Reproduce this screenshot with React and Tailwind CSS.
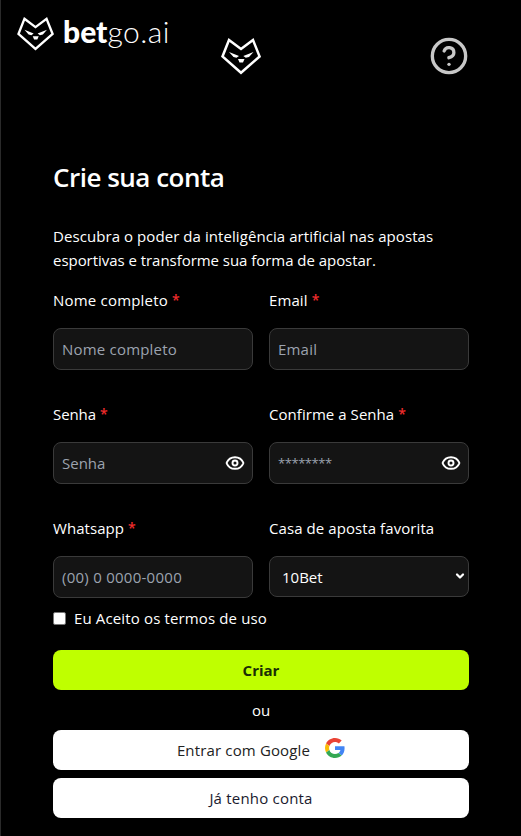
import { CircleHelp, Eye, ChevronDown } from "lucide-react";

function Wolf({ className }) {
  return (
    <svg viewBox="0 0 40 38" className={className} fill="none">
      <path
        d="M8 3 20 12 32 3 38.6 19.5 20 35.8 1.5 19.5Z"
        stroke="white"
        strokeWidth="2.5"
      />
      <path d="M8 15 18 19 15.5 20.8 12.5 20ZM32.5 15 22.3 19 24.8 20.8 28 20ZM17 22H23.5L22 25.4H18.5Z" fill="white" />
    </svg>
  );
}

function GoogleMark() {
  return (
    <svg viewBox="0 0 48 48" className="mb-1 size-5">
      <path fill="#EA4335" d="M24 9.5c3.54 0 6.71 1.22 9.21 3.6l6.85-6.85C35.9 2.38 30.47 0 24 0 14.62 0 6.51 5.38 2.56 13.22l7.98 6.19C12.43 13.72 17.74 9.5 24 9.5z" />
      <path fill="#4285F4" d="M46.98 24.55c0-1.57-.15-3.09-.38-4.55H24v9.02h12.94c-.58 2.96-2.26 5.48-4.78 7.18l7.73 6c4.51-4.18 7.09-10.36 7.09-17.65z" />
      <path fill="#FBBC05" d="M10.53 28.59c-.48-1.45-.76-2.99-.76-4.59s.27-3.14.76-4.59l-7.98-6.19C.92 16.46 0 20.12 0 24c0 3.88.92 7.54 2.56 10.78l7.97-6.19z" />
      <path fill="#34A853" d="M24 48c6.48 0 11.93-2.13 15.89-5.81l-7.73-6c-2.15 1.45-4.92 2.3-8.16 2.3-6.26 0-11.57-4.22-13.47-9.91l-7.98 6.19C6.51 42.62 14.62 48 24 48z" />
    </svg>
  );
}

function Field({ label, labelClass = "tracking-[0.1px]", required, placeholder, placeholderClass = "tracking-[0.2px]", secret }) {
  return (
    <label className="flex flex-col gap-4">
      <span className="flex h-6 items-center gap-1 whitespace-nowrap">
        <span className={labelClass}>{label}</span>
        {required && <span className="text-[14px] font-semibold text-[#f02c2c]">*</span>}
      </span>
      <span className="flex h-[42px] items-center justify-between rounded-lg border border-[#3a3a3a] bg-[#141414] pl-2 pr-[7px]">
        <span className={`whitespace-nowrap text-[#9ca3af] ${placeholderClass}`}>{placeholder}</span>
        {secret && <Eye className="size-5 text-white" strokeWidth={2.3} />}
      </span>
    </label>
  );
}

export default function App() {
  return (
    <div className="h-[836px] w-[521px] overflow-hidden border-l border-[#2a2a2a] bg-black font-['Open_Sans','Noto_Sans',sans-serif] text-[15px] leading-6 text-white">
      <header className="flex h-[161px] items-start pl-4 pt-4">
        <div className="flex w-[204px] items-start">
          <Wolf className="h-[35px] w-[37px]" />
          <div className="-mt-px ml-[9px] whitespace-nowrap font-[Lato,sans-serif] text-[30px] leading-[32px]">
            <span className="font-black">bet</span>
            <span className="font-light tracking-[0.5px]">go.ai</span>
          </div>
        </div>
        <Wolf className="mt-[21px] h-[38px] w-10" />
        <CircleHelp className="ml-[168px] mt-5 size-10 text-[#c8c8c8]" strokeWidth={2} />
      </header>

      <main className="ml-[52px] flex w-[416px] flex-col">
        <h1 className="h-8 whitespace-nowrap text-[26px] font-semibold leading-8 tracking-[-0.5px]">Crie sua conta</h1>
        <p className="mt-[31px] whitespace-nowrap">
          <span className="block tracking-[0.07px]">Descubra o poder da inteligência artificial nas apostas</span>
          <span className="block tracking-[-0.04px]">esportivas e transforme sua forma de apostar.</span>
        </p>

        <form className="mt-4">
          <div className="grid grid-cols-2 gap-x-4 gap-y-8">
            <Field label="Nome completo" labelClass="tracking-[0.2px]" required placeholder="Nome completo" />
            <Field label="Email" required placeholder="Email" />
            <Field label="Senha" labelClass="tracking-[-0.1px]" required placeholder="Senha" placeholderClass="tracking-normal" secret />
            <Field label="Confirme a Senha" labelClass="tracking-[0.05px]" required placeholder="********" placeholderClass="text-[13px] tracking-[-0.45px]" secret />
            <Field label="Whatsapp" labelClass="tracking-[0.05px]" required placeholder="(00) 0 0000-0000" placeholderClass="tracking-[0.26px]" />
            <label className="flex flex-col gap-4">
              <span className="h-6 whitespace-nowrap tracking-[0.08px]">Casa de aposta favorita</span>
              <span className="flex h-[41px] items-center justify-between rounded-lg border border-[#3a3a3a] bg-[#141414] pl-3 pr-[2px]">
                <span>10Bet</span>
                <ChevronDown className="mb-px size-3" strokeWidth={4.5} />
              </span>
            </label>
          </div>

          <label className="mt-2 flex h-6 items-center gap-2">
            <span className="size-[13px] rounded-[2px] border border-[#767676] bg-white" />
            <span className="whitespace-nowrap tracking-[0.14px]">Eu Aceito os termos de uso</span>
          </label>

          <button type="button" className="mt-5 flex h-10 w-full items-center justify-center rounded-lg bg-[#bfff00] font-bold text-[#1a2e05]">
            Criar
          </button>
          <div className="flex h-10 items-center justify-center">ou</div>
          <button type="button" className="flex h-10 w-full items-center justify-center gap-[15px] rounded-lg bg-white text-[#222]">
            <span className="tracking-[0.15px]">Entrar com Google</span>
            <GoogleMark />
          </button>
          <button type="button" className="mt-2 flex h-10 w-full items-center justify-center rounded-lg bg-white tracking-[0.2px] text-[#1a1a2e]">
            Já tenho conta
          </button>
        </form>
      </main>
    </div>
  );
}
